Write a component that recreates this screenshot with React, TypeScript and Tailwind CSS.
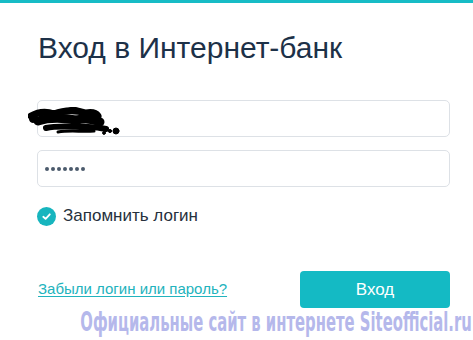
import { useState } from 'react';

function Scribble() {
  // redacted login: a hand-drawn black smudge over the field
  return (
    <svg
      className="absolute left-[-10px] top-[6px]"
      width="96"
      height="30"
      viewBox="0 0 96 30"
    >
      <g fill="#000" stroke="#000" strokeLinecap="round" strokeLinejoin="round">
        <path d="M3 9 C10 5 18 4 26 7 C36 3 48 3 58 6 C64 5 68 6 70 9" strokeWidth="7" fill="none" />
        <path d="M10 14 C22 10 36 11 48 13 C58 11 66 12 72 15" strokeWidth="9" fill="none" />
        <path d="M18 21 C30 18 46 20 60 20 C68 20 74 21 78 22" strokeWidth="6" fill="none" />
        <path d="M30 25 C42 23 54 25 66 24" strokeWidth="3" fill="none" />
        <path d="M40 4 C44 1 50 2 54 6" strokeWidth="5" fill="none" />
        <circle cx="88" cy="24" r="3" />
        <circle cx="82" cy="24" r="1.6" />
        <circle cx="76" cy="26" r="1.4" />
        <circle cx="5" cy="12" r="3.5" />
      </g>
    </svg>
  );
}

export default function App() {
  const [remember, setRemember] = useState(true);

  return (
    <div className="relative w-[473px] h-[340px] overflow-hidden bg-white font-['Liberation_Sans',Arial,sans-serif]">
      <div className="h-[3px] bg-[#17bcc6]" />

      <div className="pl-[37px] w-[450px]">
        <h1 className="mt-[27px] text-[30px] leading-[36px] text-[#1d3148] pl-px">
          Вход в Интернет-банк
        </h1>

        <div className="relative mt-[34px] h-[37px] rounded-[5px] border border-[#dde1e6]">
          <Scribble />
        </div>

        <div className="mt-[13px] h-[37px] rounded-[5px] border border-[#dde1e6] flex items-center pl-[7px] gap-[2px]">
          {Array.from({ length: 7 }).map((_, i) => (
            <span key={i} className="w-[4px] h-[4px] rounded-full bg-[#4b5a6c]" />
          ))}
        </div>

        <label
          className="mt-[19px] h-[20px] flex items-center gap-[7px] cursor-pointer select-none"
          onClick={() => setRemember(!remember)}
        >
          <span
            className={
              remember
                ? 'w-[19px] h-[19px] rounded-full bg-[#17b5be] flex items-center justify-center'
                : 'w-[19px] h-[19px] rounded-full border border-[#c8ced6] flex items-center justify-center'
            }
          >
            {remember && (
              <svg width="11" height="11" viewBox="0 0 12 12">
                <path
                  d="M2.5 6.3 L5 8.6 L9.6 3.6"
                  fill="none"
                  stroke="#fff"
                  strokeWidth="2"
                  strokeLinecap="round"
                  strokeLinejoin="round"
                />
              </svg>
            )}
          </span>
          <span className="text-[17px] text-[#26303c]">Запомнить логин</span>
        </label>

        <div className="mt-[45px] flex items-center justify-between">
          <a href="#" className="text-[15px] text-[#22b3bd] underline underline-offset-2 pl-px">
            Забыли логин или пароль?
          </a>
          <button className="w-[150px] h-[37px] rounded-[4px] bg-[#14bac4] text-white text-[17px]">
            Вход
          </button>
        </div>
      </div>

      <div className="absolute right-[1px] top-[306px] origin-right scale-x-[0.61] whitespace-nowrap font-['DejaVu_Sans_Condensed','DejaVu_Sans',sans-serif] font-bold text-[27px] leading-[32px] text-[#b5b8eb]">
        Официальные сайт в интернете Siteofficial.ru
      </div>
    </div>
  );
}
